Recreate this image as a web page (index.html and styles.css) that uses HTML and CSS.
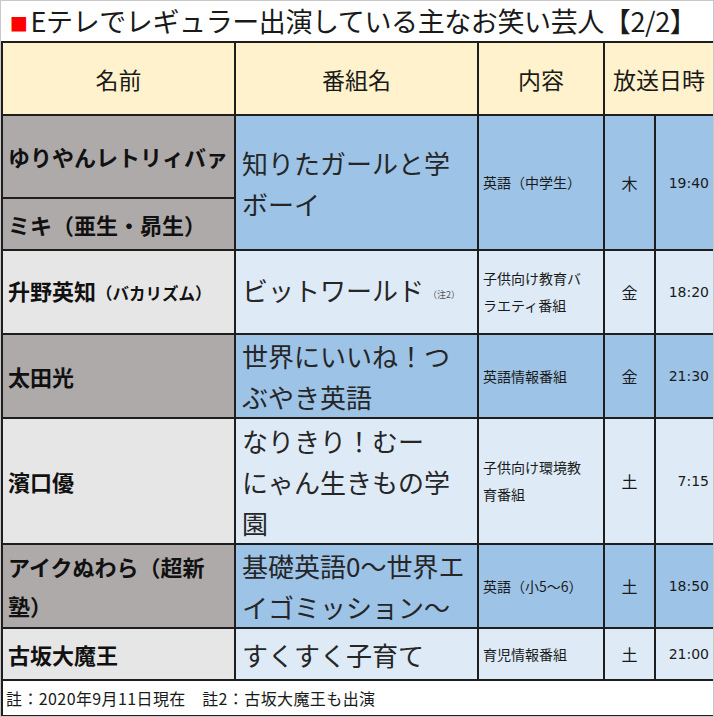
FILE: index.html
```html
<!DOCTYPE html>
<html lang="ja">
<head>
<meta charset="utf-8">
<link rel="stylesheet" href="styles.css">
</head>
<body>
<div class="page">
  <div class="title"><span class="mark">■</span>Eテレでレギュラー出演している主なお笑い芸人【2/2】</div>
  <table class="grid">
    <colgroup>
      <col class="c-name"><col class="c-prog"><col class="c-cont"><col class="c-day"><col class="c-time">
    </colgroup>
    <tr class="head">
      <th>名前</th><th>番組名</th><th>内容</th><th colspan="2">放送日時</th>
    </tr>
    <tr class="r1a dark">
      <td class="name">ゆりやんレトリィバァ</td>
      <td class="prog" rowspan="2">知りたガールと学<br>ボーイ</td>
      <td class="cont" rowspan="2">英語（中学生）</td>
      <td class="day" rowspan="2">木</td>
      <td class="time" rowspan="2">19:40</td>
    </tr>
    <tr class="r1b dark">
      <td class="name">ミキ（亜生・昴生）</td>
    </tr>
    <tr class="r2 light">
      <td class="name">升野英知<span class="small">（バカリズム）</span></td>
      <td class="prog">ビットワールド<span class="note2">（注2）</span></td>
      <td class="cont">子供向け教育バ<br>ラエティ番組</td>
      <td class="day">金</td>
      <td class="time">18:20</td>
    </tr>
    <tr class="r3 dark">
      <td class="name">太田光</td>
      <td class="prog">世界にいいね！つ<br>ぶやき英語</td>
      <td class="cont">英語情報番組</td>
      <td class="day">金</td>
      <td class="time">21:30</td>
    </tr>
    <tr class="r4 light">
      <td class="name">濱口優</td>
      <td class="prog">なりきり！むー<br>にゃん生きもの学<br>園</td>
      <td class="cont">子供向け環境教<br>育番組</td>
      <td class="day">土</td>
      <td class="time">7:15</td>
    </tr>
    <tr class="r5 dark">
      <td class="name">アイクぬわら（超新<br>塾）</td>
      <td class="prog">基礎英語0～世界エ<br>イゴミッション～</td>
      <td class="cont">英語（小5～6）</td>
      <td class="day">土</td>
      <td class="time">18:50</td>
    </tr>
    <tr class="r6 light">
      <td class="name">古坂大魔王</td>
      <td class="prog">すくすく子育て</td>
      <td class="cont">育児情報番組</td>
      <td class="day">土</td>
      <td class="time">21:00</td>
    </tr>
    <tr class="foot">
      <td colspan="5">註：2020年9月11日現在　註2：古坂大魔王も出演</td>
    </tr>
  </table>
</div>
</body>
</html>
```

FILE: styles.css
```css
html, body {
  margin: 0;
  padding: 0;
  background: #ffffff;
}

.page {
  width: 714px;
  height: 717px;
  box-sizing: border-box;
  border: 1px solid #c8c8c8;
  background: #ffffff;
  overflow: hidden;
  font-family: "Noto Sans CJK JP", "Noto Sans", sans-serif;
  color: #1a1a1a;
}

.title {
  height: 40px;
  line-height: 40px;
  padding-left: 9px;
  font-size: 27px;
  color: #1a1a1a;
  white-space: nowrap;
  letter-spacing: -0.4px;
}

.mark {
  color: #ff0000;
  font-family: "DejaVu Sans", sans-serif;
  font-size: 19px;
  margin-right: 3px;
  position: relative;
  top: -3px;
}

.grid {
  border-collapse: collapse;
  table-layout: fixed;
  width: 712px;
  margin-left: 0;
}

.c-name { width: 233px; }
.c-prog { width: 243px; }
.c-cont { width: 126px; }
.c-day { width: 51px; }
.c-time { width: 59px; }

.grid th,
.grid td {
  border: 2px solid #1e1e1e;
  padding: 0;
  overflow: hidden;
}

.head th {
  height: 71px;
  background: #fff2cc;
  font-weight: normal;
  font-size: 23px;
  color: #1a1a1a;
  text-align: center;
}

.r1a td.name { height: 81px; }
.r1b td.name { height: 50px; }
.r2 td { height: 82px; }
.r3 td { height: 81px; }
.r4 td { height: 124px; }
.r5 td { height: 82px; }
.r6 td { height: 50px; }

.dark .name { background: #aeaaaa; }
.dark .prog,
.dark .cont,
.dark .day,
.dark .time { background: #9dc3e6; }

.light .name { background: #e7e6e6; }
.light .prog,
.light .cont,
.light .day,
.light .time { background: #deebf7; }

.name {
  font-weight: bold;
  font-size: 22px;
  line-height: 39px;
  padding-left: 5px !important;
  color: #111111;
  white-space: nowrap;
}

.small {
  font-size: 16.5px;
}

.prog {
  font-size: 26px;
  line-height: 41px;
  padding-left: 6px !important;
  color: #262626;
  white-space: nowrap;
}

.note2 {
  font-size: 9px;
  color: #555555;
  margin-left: 4px;
  vertical-align: 3px;
}

.cont {
  font-size: 14px;
  line-height: 27px;
  padding-left: 4px !important;
  color: #1a1a1a;
  white-space: nowrap;
}

.day {
  text-align: center;
  font-size: 16px;
  color: #1a1a1a;
}

.time {
  text-align: right;
  padding-right: 4px !important;
  font-family: "DejaVu Sans", sans-serif;
  font-size: 14px;
  color: #1a1a1a;
}

.foot td {
  height: 34px;
  background: #ffffff;
  font-size: 16px;
  padding-left: 3px !important;
  border-bottom-width: 1px;
  color: #1a1a1a;
  letter-spacing: 0.4px;
}
```
